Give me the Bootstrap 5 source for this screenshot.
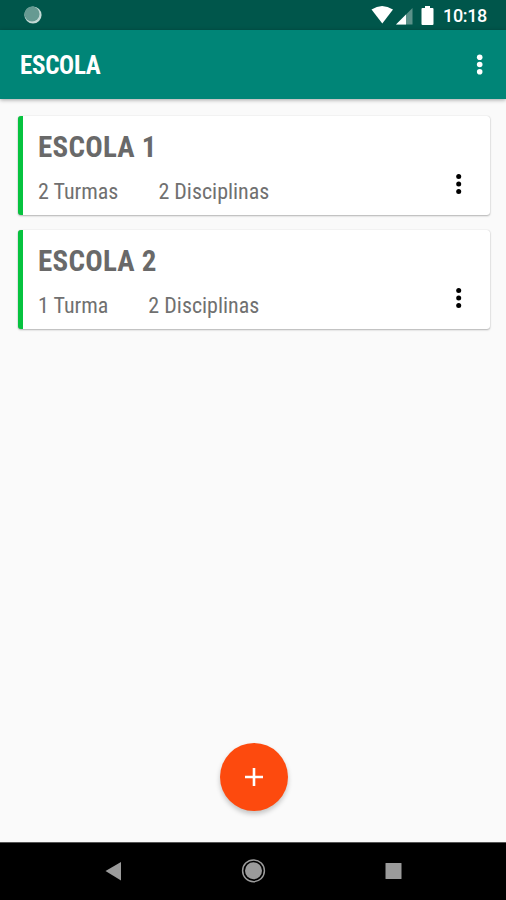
<!DOCTYPE html>
<html lang="pt-BR">
<head>
<meta charset="utf-8">
<meta name="viewport" content="width=device-width, initial-scale=1">
<title>Escola</title>
<link href="https://cdn.jsdelivr.net/npm/bootstrap@5.3.0/dist/css/bootstrap.min.css" rel="stylesheet">
<style>
body{height:900px;background:#fafafa;font-family:"Roboto Condensed",Roboto,"Liberation Sans",sans-serif;font-stretch:75%;overflow:hidden}
svg{display:block;flex:none}
.status{height:30px;background:#00564b;padding:0 19px 0 23px}
.clock{font:500 18px/30px Roboto,sans-serif;letter-spacing:-.35px;margin-left:6px;padding-top:1px}
.appbar{height:69px;background:#008577;padding:0 22px 0 20px;box-shadow:0 1px 4px rgba(0,0,0,.35)}
.appbar h1{font-size:25px;line-height:30px;font-weight:700;padding-top:3px;letter-spacing:-.3px}
main{padding:17px 16px 0 18px}
.school{height:99px;margin-bottom:15px;border:0;border-left:5px solid #06c33f;border-radius:3px;color:#696969;background:#fff;padding:0 27px 0 15px;box-shadow:0 1px 2px rgba(0,0,0,.28),0 0 1px rgba(0,0,0,.2)}
.school h2{font-size:29px;line-height:34px;font-weight:700;margin:14px 0 0;letter-spacing:.25px}
.info{font-size:22px;line-height:26px;margin-top:15px;gap:40px;letter-spacing:0;color:#707070}
.menu{margin-top:37px;color:#000}
.fab{width:68px;height:68px;background:#fd4a0e;margin:0 0 31px 1px;box-shadow:0 3px 5px rgba(0,0,0,.22)}
.sysnav{height:58px;background:#000;border-top:1px solid #555}
</style>
</head>
<body class="d-flex flex-column">
<div class="status d-flex align-items-center text-white">
  <svg width="20" height="20" viewBox="0 0 20 20"><circle cx="10" cy="10" r="8.600" fill="#c3d9d5"/><circle cx="9" cy="9" r="7.500" fill="#669a92"/></svg>
  <svg class="ms-auto" width="73" height="30" viewBox="0 0 73 30" fill="#fff"><path d="M7.500 9.500Q18 2.500 29 9.500L18.300 23.500Z"/><path d="M48.500 8V24.500H32Z" fill="#5b9189"/><path d="M42 14.500V24.500H32Z"/><path d="M61 6h5v2h2.500q1 0 1 1v15q0 1-1 1h-10q-1 0-1-1V9q0-1 1-1H61Z"/></svg>
  <span class="clock">10:18</span>
</div>
<header class="appbar d-flex align-items-center justify-content-between text-white">
  <h1 class="m-0">ESCOLA</h1>
  <svg width="8" height="22" viewBox="0 0 8 22" fill="#fff"><circle cx="3.700" cy="3.300" r="2.800"/><circle cx="3.700" cy="10.500" r="2.800"/><circle cx="3.700" cy="17.700" r="2.800"/></svg>
</header>
<main class="flex-grow-1">
  <section class="school card flex-row justify-content-between align-items-center">
    <div class="align-self-start"><h2>ESCOLA 1</h2><div class="info d-flex"><span>2 Turmas</span><span>2 Disciplinas</span></div></div>
    <svg class="menu" width="8" height="22" viewBox="0 0 8 22"><circle cx="3.700" cy="3.500" r="2.500"/><circle cx="3.700" cy="11" r="2.500"/><circle cx="3.700" cy="18.500" r="2.500"/></svg>
  </section>
  <section class="school card flex-row justify-content-between align-items-center">
    <div class="align-self-start"><h2>ESCOLA 2</h2><div class="info d-flex"><span>1 Turma</span><span>2 Disciplinas</span></div></div>
    <svg class="menu" width="8" height="22" viewBox="0 0 8 22"><circle cx="3.700" cy="3.500" r="2.500"/><circle cx="3.700" cy="11" r="2.500"/><circle cx="3.700" cy="18.500" r="2.500"/></svg>
  </section>
</main>
<button class="fab btn border-0 rounded-circle p-0 d-flex align-items-center justify-content-center align-self-center" aria-label="Adicionar">
  <svg width="18" height="18" viewBox="0 0 18 18"><path d="M9 0V18M0 9H18" stroke="#fff" stroke-width="2.600"/></svg>
</button>
<nav class="sysnav">
  <svg width="506" height="57" viewBox="0 0 506 57" fill="#9b9b9b"><path d="M105.500 28L121 19V37.500Z"/><circle cx="253.500" cy="27.800" r="8.500"/><circle cx="253.500" cy="27.800" r="10.900" fill="none" stroke="#9b9b9b" stroke-width="1.500"/><rect x="385.500" y="20" width="16" height="16" rx=".5"/></svg>
</nav>
<script src="https://cdn.jsdelivr.net/npm/bootstrap@5.3.0/dist/js/bootstrap.bundle.min.js"></script>
</body>
</html>
